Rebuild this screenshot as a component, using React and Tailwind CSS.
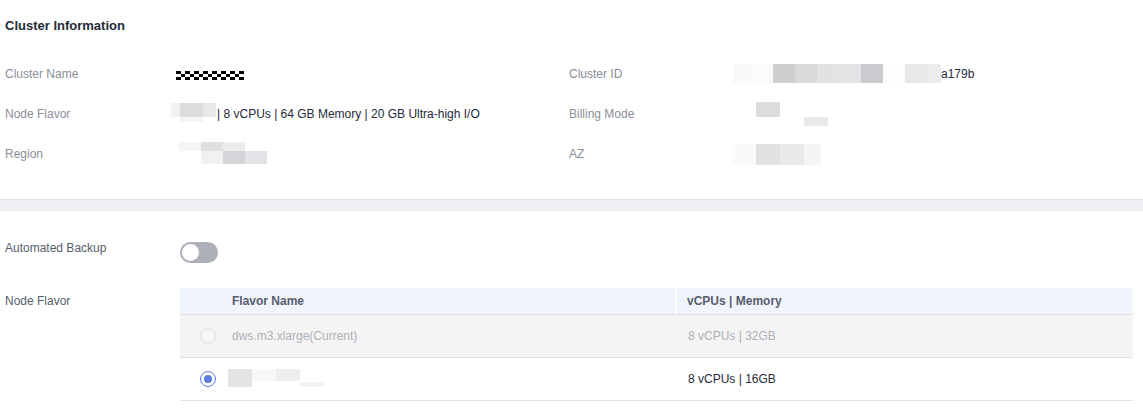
import React from 'react';

// pixelated redaction blocks, drawn as a picture
function Mosaic({ width, height, cells, className = '' }) {
  return (
    <svg width={width} height={height} className={`block shrink-0 ${className}`}>
      {cells.map(([x, y, w, h, fill], i) => (
        <rect key={i} x={x} y={y} width={w} height={h} fill={fill} />
      ))}
    </svg>
  );
}

const checker = [];
{
  let x = 5;
  for (let c = 0; c < 15; c++) {
    const w = c % 2 === 0 ? 5 : 4;
    for (let r = 0; r < 3; r++) {
      if ((c + r) % 2 === 0) checker.push([x, 17 + r * 3, w, 3, '#000']);
    }
    x += w;
  }
}

const InfoLabel = ({ children, w }) => (
  <div className={`${w} shrink-0 text-[12px] text-[#8a8e99]`}>{children}</div>
);

const Radio = ({ checked, disabled }) => (
  <span
    className={`flex h-[16px] w-[16px] items-center justify-center rounded-full border ${
      disabled ? 'border-[#dfe1e6] bg-[#f5f5f6]' : 'border-[#5e7ce0] bg-white'
    }`}
  >
    {checked && <span className="h-[8px] w-[8px] rounded-full bg-[#5e7ce0]" />}
  </span>
);

export default function App() {
  return (
    <div className="w-[1143px] bg-white font-['Liberation_Sans',Arial,sans-serif] text-[#252b3a]">
      {/* Cluster Information */}
      <section className="px-[5px] pt-[17px] pb-[25px]">
        <h2 className="text-[13px] font-bold leading-[18px]">Cluster Information</h2>
        <div className="mt-[19px]">
          <div className="flex h-[40px] items-center">
            <div className="flex w-[564px] items-center">
              <InfoLabel w="w-[166px]">Cluster Name</InfoLabel>
              <Mosaic width={80} height={40} cells={checker} />
            </div>
            <div className="flex items-center">
              <InfoLabel w="w-[163px]">Cluster ID</InfoLabel>
              <Mosaic
                width={209}
                height={40}
                cells={[
                  [1, 10, 17, 19, '#f9f9f9'],
                  [18, 10, 23, 19, '#fbfbfb'],
                  [41, 10, 22, 19, '#cfcfd1'],
                  [63, 10, 22, 19, '#dadadc'],
                  [85, 10, 21, 19, '#e2e2e4'],
                  [106, 10, 23, 19, '#e4e4e6'],
                  [129, 10, 22, 19, '#cacbcf'],
                  [151, 10, 22, 19, '#fdfdfd'],
                  [173, 10, 22, 19, '#e8e8ea'],
                  [195, 10, 14, 19, '#ececee'],
                ]}
              />
              <span className="text-[12px]">a179b</span>
            </div>
          </div>

          <div className="flex h-[40px] items-center">
            <div className="flex w-[564px] items-center">
              <InfoLabel w="w-[166px]">Node Flavor</InfoLabel>
              <Mosaic
                width={46}
                height={40}
                cells={[
                  [0, 9, 9, 14, '#f2f2f3'],
                  [9, 9, 23, 14, '#dcdcdf'],
                  [32, 9, 13, 14, '#e9e9eb'],
                  [9, 23, 23, 5, '#f5f5f6'],
                ]}
              />
              <span className="text-[12px]">| 8 vCPUs | 64 GB Memory | 20 GB Ultra-high I/O</span>
            </div>
            <div className="flex items-center">
              <InfoLabel w="w-[163px]">Billing Mode</InfoLabel>
              <Mosaic
                width={100}
                height={40}
                cells={[
                  [24, 8, 24, 15, '#dcdcde'],
                  [72, 23, 24, 9, '#e9e9eb'],
                ]}
              />
            </div>
          </div>

          <div className="flex h-[40px] items-center">
            <div className="flex w-[564px] items-center">
              <InfoLabel w="w-[166px]">Region</InfoLabel>
              <Mosaic
                width={100}
                height={40}
                cells={[
                  [8, 8, 22, 9, '#f4f5f5'],
                  [30, 8, 22, 9, '#e0e0e0'],
                  [52, 8, 22, 9, '#ececee'],
                  [30, 17, 22, 13, '#f1f1f3'],
                  [52, 17, 22, 13, '#d5d5d9'],
                  [74, 17, 22, 13, '#e1e3e6'],
                ]}
              />
            </div>
            <div className="flex items-center">
              <InfoLabel w="w-[163px]">AZ</InfoLabel>
              <Mosaic
                width={100}
                height={40}
                cells={[
                  [0, 10, 24, 21, '#fbfaf9'],
                  [24, 10, 24, 21, '#dfe1e3'],
                  [48, 10, 24, 21, '#e8e9eb'],
                  [72, 10, 17, 21, '#f5f5f6'],
                ]}
              />
            </div>
          </div>
        </div>
      </section>

      {/* divider band */}
      <div className="h-[12px] border-y border-[#e2e2e8] bg-[#efeff4]" />

      {/* Modify section */}
      <section className="pl-[5px] pr-[10px] pt-[29px]">
        <div className="flex items-start">
          <div className="w-[175px] shrink-0 text-[12px] leading-[16px] text-[#575d6c]">Automated Backup</div>
          <button className="mt-[2px] flex h-[21px] w-[38px] items-center rounded-full bg-[#adb0b8] pl-[2px]">
            <span className="h-[17px] w-[17px] rounded-full bg-white" />
          </button>
        </div>

        <div className="mt-[25px] flex items-start">
          <div className="w-[175px] shrink-0 text-[12px] leading-[27px] text-[#575d6c]">Node Flavor</div>
          <div className="w-[953px] text-[12px]">
            <div className="flex h-[27px] items-center border-b border-[#dfe1e6] bg-[#f0f4fc] font-bold text-[#575d6c]">
              <div className="w-[52px] shrink-0" />
              <div className="flex h-full w-[445px] items-center border-r-2 border-white">Flavor Name</div>
              <div className="pl-[10px]">vCPUs | Memory</div>
            </div>
            <div className="flex h-[43px] items-center border-b border-[#dfe1e6] bg-[#f4f4f4] text-[#adb0b8]">
              <div className="w-[52px] shrink-0 pl-[20px]">
                <Radio disabled />
              </div>
              <div className="w-[445px]">dws.m3.xlarge(Current)</div>
              <div className="pl-[11px]">8 vCPUs | 32GB</div>
            </div>
            <div className="flex h-[43px] items-center border-b border-[#dfe1e6] bg-white">
              <div className="w-[52px] shrink-0 pl-[20px]">
                <Radio checked />
              </div>
              <div className="w-[445px]">
                <Mosaic
                  width={100}
                  height={42}
                  className="-ml-[4px]"
                  cells={[
                    [0, 11, 24, 18, '#e4e4e6'],
                    [24, 11, 24, 12, '#f8f8f8'],
                    [48, 11, 24, 12, '#eeeef0'],
                    [72, 24, 24, 5, '#f2f2f4'],
                  ]}
                />
              </div>
              <div className="pl-[11px]">8 vCPUs | 16GB</div>
            </div>
          </div>
        </div>
      </section>
    </div>
  );
}
